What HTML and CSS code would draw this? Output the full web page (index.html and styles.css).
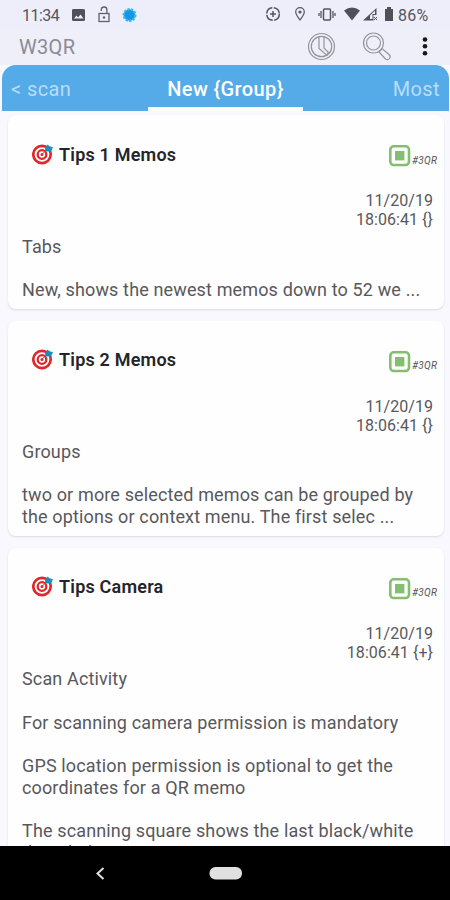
FILE: index.html
```
<!DOCTYPE html>
<html lang="en">
<head>
<meta charset="utf-8">
<title>W3QR</title>
<link rel="stylesheet" href="styles.css">
</head>
<body>
<svg class="defs" width="0" height="0">
  <symbol id="target" viewBox="0 0 22 22">
    <circle cx="10" cy="11.500" r="8.700" fill="#fff" stroke="#e0282b" stroke-width="2.700"/>
    <circle cx="10" cy="11.500" r="4.300" fill="#fff" stroke="#e0282b" stroke-width="2.300"/>
    <circle cx="10" cy="11.500" r="1.500" fill="#e0282b"/>
    <path d="M10 11.500 15 6" stroke="#8b5a50" stroke-width="1"/>
    <path d="M13 5.500 15.500 1.500l2 1.800 3.500 1-2 4-5.500.3z" fill="#168fbd"/>
  </symbol>
  <symbol id="code" viewBox="0 0 22 22">
    <rect x="1.300" y="1.300" width="18.700" height="18.700" rx="3.500" fill="#fff" stroke="#83bf6e" stroke-width="2.600"/>
    <rect x="6" y="6" width="9.400" height="9.400" fill="#83bf6e"/>
  </symbol>
</svg>
<div class="screen">
  <header class="status">
    <span class="time">11:34</span>
    <svg class="status-left" width="66" height="20" viewBox="0 0 66 20">
      <path fill="#505058" fill-rule="evenodd" d="M1 4h10.500q1.500 0 1.500 1.500v9q0 1.500-1.500 1.500H1.500Q0 16 0 14.500v-9Q0 4 1 4ZM2 13.500h9.500l-3-4-2.500 3-1.500-2z"/>
      <g fill="none" stroke="#606068" stroke-width="1.300"><rect x="27" y="8.500" width="10" height="8"/><path d="M29.300 6V4.800a2.800 2.800 0 0 1 5.600 0V8"/></g>
      <circle cx="32" cy="12.500" r="1.200" fill="#606068"/>
      <circle cx="57.500" cy="10" r="5.800" fill="#1696e3" stroke="#35b9f5" stroke-width="2.400" stroke-dasharray="2.300 1.200"/>
    </svg>
    <svg class="status-right" width="130" height="20" viewBox="266 4 130 20">
      <g fill="none" stroke="#55555d" stroke-width="1.500">
        <circle cx="273" cy="14" r="6.300" stroke-dasharray="8.400 1.500"/><path d="M270 14h6M273 11v6"/>
        <path d="M300 20c-3-4-4.300-6-4.300-8a4.300 4.300 0 0 1 8.600 0c0 2-1.300 4-4.300 8Z" stroke-width="1.200"/>
        <rect x="323.500" y="9" width="7" height="11" rx="1"/>
        <path d="M321 11v7M333 11v7M319 13v3M335 13v3" stroke-width="1.300"/>
      </g>
      <circle cx="300" cy="12" r="1.600" fill="#55555d"/>
      <path d="M344 10.500q8-6 16 0l-8 10z" fill="#505058"/>
      <path fill-rule="evenodd" d="M363 20.500 376.500 8v7h-3v5.500zM370 15.500v3.500h2.500v-5h2.500v-3.500z" fill="#505058"/>
      <path d="m374 17 3 3m0-3-3 3" stroke="#505058"/>
      <path d="M385 9h2V7h4v2h2v12h-8z" fill="#505058"/>
    </svg>
    <span class="battery">86%</span>
  </header>
  <div class="appbar">
    <h1>W3QR</h1>
    <svg width="130" height="32" viewBox="305 31 130 32">
      <g fill="none" stroke="#94949c" stroke-width="1.200">
        <circle cx="321.500" cy="46.500" r="13"/><circle cx="321.500" cy="46.500" r="10.200"/>
        <path d="M319 37v11.500l7.500 6.500 2-2.500-4.500-4.500V37"/>
        <circle cx="373.500" cy="43" r="10"/><circle cx="373.500" cy="43" r="7"/>
        <path d="m379 52 6.500 7q2.500 1.500 4-.5t0-3.500L382 48.500z"/>
      </g>
      <g fill="#17171a"><circle cx="425" cy="39.500" r="2.300"/><circle cx="425" cy="46.300" r="2.300"/><circle cx="425" cy="53.200" r="2.300"/></g>
    </svg>
  </div>
  <nav class="tabs">
    <span class="tab first">&lt; scan</span>
    <span class="tab active">New {Group}</span>
    <span class="tab last">Most</span>
  </nav>
  <main class="list">
    <article class="card">
      <div class="head"><svg class="target"><use href="#target"/></svg><h2>Tips 1 Memos</h2><svg class="code"><use href="#code"/></svg><span class="tag">#3QR</span></div>
      <div class="date">11/20/19<br>18:06:41 {}</div>
      <p>Tabs</p>
      <p>New, shows the newest memos down to 52 we ...</p>
    </article>
    <article class="card">
      <div class="head"><svg class="target"><use href="#target"/></svg><h2>Tips 2 Memos</h2><svg class="code"><use href="#code"/></svg><span class="tag">#3QR</span></div>
      <div class="date">11/20/19<br>18:06:41 {}</div>
      <p>Groups</p>
      <p>two or more selected memos can be grouped by<br>the options or context menu. The first selec ...</p>
    </article>
    <article class="card">
      <div class="head"><svg class="target"><use href="#target"/></svg><h2>Tips Camera</h2><svg class="code"><use href="#code"/></svg><span class="tag">#3QR</span></div>
      <div class="date">11/20/19<br>18:06:41 {+}</div>
      <p>Scan Activity</p>
      <p>For scanning camera permission is mandatory</p>
      <p>GPS location permission is optional to get the<br>coordinates for a QR memo</p>
      <p>The scanning square shows the last black/white<br>decoded picture</p>
    </article>
  </main>
  <footer class="navbar">
    <svg width="150" height="20" viewBox="93 863 150 20"><path d="m103.500 868-6 5.500 6 5.500" fill="none" stroke="#e0e0e0" stroke-width="2"/><rect x="209.500" y="867" width="32.500" height="12.500" rx="6" fill="#e0e0e0"/></svg>
  </footer>
</div>
</body>
</html>
```
FILE: styles.css
```
* { box-sizing: border-box; }
body { margin: 0; font-family: Roboto, "Liberation Sans", sans-serif; }
h1, h2, p { margin: 0; }
.defs { display: block; }
.screen { width: 450px; height: 900px; display: flex; flex-direction: column; overflow: hidden; background: #f8f8fe; }
.status { height: 30px; flex: none; display: flex; align-items: center; padding-left: 22px; background: #eeeefb; color: #55555d; font-size: 16px; }
.time { width: 50px; letter-spacing: -.5px; }
.status-left { margin-top: -1px; }
.status-right { margin: -2px 0 0 128px; }
.battery { margin-left: 2px; letter-spacing: .2px; }
.appbar { height: 35px; flex: none; display: flex; justify-content: space-between; padding: 1px 15px 0 19px; background: #efeffa; }
.appbar h1 { font-size: 20px; font-weight: 400; line-height: 33px; color: #8b8b93; letter-spacing: .3px; }
.tabs { height: 46px; flex: none; margin: 0 1px 0 2px; display: grid; grid-template-columns: 146px 155px 1fr; grid-template-rows: 46px; background: #54abe8; border-radius: 14px 14px 0 0; line-height: 48px; font-size: 20px; letter-spacing: .4px; color: #b9ddf7; }
.first { padding-left: 9px; }
.active { height: 46px; text-align: center; color: #fff; font-weight: 500; border-bottom: 4px solid #fdfdff; }
.last { text-align: right; padding-right: 9px; }
.list { flex: 1; min-height: 0; overflow: hidden; padding: 4px 6px 0 8px; display: flex; flex-direction: column; gap: 12px; }
.card { flex: none; background: #fefeff; border-radius: 8px; padding: 26px 11px 8px 14px; box-shadow: 0 1px 2px #d9d9e2; color: #58585c; }
.head { height: 26px; display: flex; align-items: center; padding-left: 10px; margin-right: -5px; }
.target { width: 22px; height: 22px; margin-top: -1px; }
.head h2 { flex: 1; margin-left: 5px; font-size: 18px; font-weight: 600; letter-spacing: .2px; color: #252528; }
.code { width: 22px; height: 22px; margin-top: 4px; }
.tag { width: 26px; font-size: 10px; font-style: italic; letter-spacing: .3px; margin: 12px 0 0 1px; color: #555; }
.date { margin-top: 24px; text-align: right; font-size: 16px; line-height: 19.3px; letter-spacing: .05px; }
.card p { font-size: 18px; line-height: 21.65px; letter-spacing: .14px; white-space: nowrap; margin-bottom: 21.65px; }
.date + p { margin-top: 6px; }
.card p:last-child { margin-bottom: 0; }
.navbar { height: 54px; flex: none; background: #000; display: flex; align-items: center; padding-left: 93px; }
```
